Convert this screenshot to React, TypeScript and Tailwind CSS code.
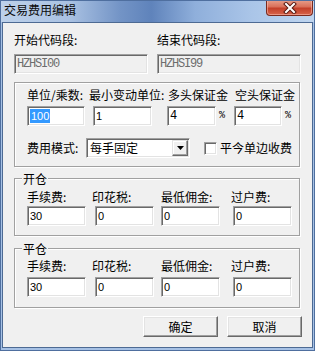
import React from "react";

const cjk = "font-['Noto_Sans_CJK_SC','Liberation_Sans',sans-serif]";
const sans = "font-['Liberation_Sans',sans-serif]";
const mono = "font-['Liberation_Mono',monospace]";

function Field({
  className = "",
  disabled = false,
  children,
}: {
  className?: string;
  disabled?: boolean;
  children?: React.ReactNode;
}) {
  return (
    <div
      className={`box-border h-[20px] border border-t-[#a0a0a0] border-l-[#a0a0a0] border-b-white border-r-white shadow-[inset_1px_1px_0_#696969,inset_-1px_-1px_0_#e3e3e3] flex items-center pl-[2px] overflow-hidden ${
        disabled ? "bg-[#f0f0f0] text-[#6d6d6d]" : "bg-white text-black"
      } ${className}`}
    >
      {children}
    </div>
  );
}

function Group({
  title,
  className = "",
  children,
}: {
  title?: string;
  className?: string;
  children?: React.ReactNode;
}) {
  return (
    <div
      className={`relative box-border ml-[11px] w-[286px] border border-[#a0a0a0] shadow-[inset_1px_1px_0_#ffffff,1px_1px_0_#ffffff] ${className}`}
    >
      {title && (
        <span className="absolute left-[7px] top-[-7px] px-[1px] bg-[#f0f0f0] text-[12px] leading-[14px]">
          {title}
        </span>
      )}
      {children}
    </div>
  );
}

function Btn({ children }: { children: React.ReactNode }) {
  return (
    <div className="box-border w-[75px] h-[21px] bg-[#f0f0f0] border border-t-white border-l-white border-r-[#696969] border-b-[#696969] shadow-[inset_-1px_-1px_0_#a0a0a0,inset_1px_1px_0_#e3e3e3] flex items-center justify-center text-[12px] leading-[14px] pt-[1px]">
      {children}
    </div>
  );
}

function FeeGroup({ title, top, pt, gap, h }: { title: string; top: string; pt: string; gap: string; h: string }) {
  return (
    <Group title={title} className={`${top} ${h}`}>
      <div className={`flex pl-[12px] ${pt}`}>
        <span className="w-[65px]">手续费:</span>
        <span className="w-[69px]">印花税:</span>
        <span className="w-[70px]">最低佣金:</span>
        <span>过户费:</span>
      </div>
      <div className={`flex pl-[12px] ${gap}`}>
        <Field className="w-[59px]">
          <span className={`${sans} text-[11px]`}>30</span>
        </Field>
        <Field className="ml-[9px] w-[59px]">
          <span className={`${sans} text-[11px]`}>0</span>
        </Field>
        <Field className="ml-[7px] w-[59px]">
          <span className={`${sans} text-[11px]`}>0</span>
        </Field>
        <Field className="ml-[13px] w-[59px]">
          <span className={`${sans} text-[11px]`}>0</span>
        </Field>
      </div>
    </Group>
  );
}

export default function App() {
  return (
    <div
      className={`box-border w-[315px] h-[351px] border border-[#4f6f9f] bg-[#a6c1e5] overflow-hidden ${cjk} text-black`}
    >
      {/* title bar */}
      <div className="h-[21px] flex justify-between bg-[linear-gradient(90deg,#bdd1ea_0%,#a9c1e2_22%,#7394c6_38%,#5f83bb_48%,#8fafdb_62%,#aac5e8_80%,#bfd5ef_100%)]">
        <span className="ml-[3px] mt-[1px] text-[12px] leading-[16px] text-[#0b0b0b]">
          交易费用编辑
        </span>
        <div className="box-border mt-[-1px] mr-[1px] w-[47px] h-[16px] rounded-b-[4px] border border-t-0 border-[#7a2a1e] bg-[linear-gradient(180deg,#e7a08c_0%,#d9705a_45%,#c3402a_55%,#d7644a_100%)] shadow-[inset_0_0_0_1px_rgba(255,200,190,0.5)] flex items-center justify-center">
          <svg width="14" height="12" viewBox="0 0 14 12">
            <path d="M3 2 L11 10 M11 2 L3 10" stroke="#5a1a12" strokeWidth="4" strokeLinecap="square" />
            <path d="M3 2 L11 10 M11 2 L3 10" stroke="#ffffff" strokeWidth="2" strokeLinecap="square" />
          </svg>
        </div>
      </div>

      {/* client area */}
      <div className="box-border ml-[1px] w-[311px] h-[326px] border border-[#4d6a93] bg-[#f0f0f0] text-[12px] leading-[14px]">
        {/* top code fields */}
        <div className="flex pt-[10px]">
          <div className="ml-[11px] w-[134px]">
            <div className="h-[14px]">开始代码段:</div>
            <Field disabled className="mt-[7px] w-[134px]">
              <span className={`${mono} text-[12px] tracking-[-1.2px]`}>HZHSI00</span>
            </Field>
          </div>
          <div className="ml-[9px] w-[144px]">
            <div className="h-[14px]">结束代码段:</div>
            <Field disabled className="mt-[7px] w-[144px]">
              <span className={`${mono} text-[12px] tracking-[-1.2px]`}>HZHSI99</span>
            </Field>
          </div>
        </div>

        {/* group 1 */}
        <Group className="mt-[8px] h-[85px]">
          <div className="flex pt-[5px] pl-[12px] h-[19px]">
            <span className="w-[62px]">单位/乘数:</span>
            <span className="w-[79px]">最小变动单位:</span>
            <span className="w-[67px]">多头保证金</span>
            <span>空头保证金</span>
          </div>
          <div className="flex items-center mt-[4px] pl-[12px]">
            <Field className="w-[58px]">
              <span className={`${sans} text-[11px] leading-[14px] bg-[#3399ff] text-white px-[1px]`}>100</span>
            </Field>
            <Field className="ml-[8px] w-[59px]">
              <span className={`${sans} text-[11px]`}>1</span>
            </Field>
            <Field className="ml-[15px] w-[49px]">
              <span className={`${mono} text-[12px]`}>4</span>
            </Field>
            <span className={`${mono} text-[10px] w-[18px] pl-[3px]`}>%</span>
            <Field className="w-[48px]">
              <span className={`${mono} text-[12px]`}>4</span>
            </Field>
            <span className={`${mono} text-[10px] pl-[3px]`}>%</span>
          </div>
          <div className="flex items-center mt-[12px] pl-[12px] h-[20px]">
            <span className="w-[59px]">费用模式:</span>
            <Field className="w-[104px] pl-[1px] pr-[1px]">
              <span className="flex-1 pl-[1px]">每手固定</span>
              <div className="box-border w-[16px] h-[16px] bg-[#f0f0f0] border border-t-[#e3e3e3] border-l-[#e3e3e3] border-r-[#696969] border-b-[#696969] shadow-[inset_-1px_-1px_0_#a0a0a0,inset_1px_1px_0_#ffffff] flex items-center justify-center">
                <svg width="7" height="4" viewBox="0 0 7 4">
                  <path d="M0 0 H7 L3.5 4 Z" fill="#000" />
                </svg>
              </div>
            </Field>
            <div className="box-border ml-[14px] w-[13px] h-[13px] bg-white border border-t-[#a0a0a0] border-l-[#a0a0a0] border-b-white border-r-white shadow-[inset_1px_1px_0_#696969,inset_-1px_-1px_0_#e3e3e3]" />
            <span className="ml-[3px]">平今单边收费</span>
          </div>
        </Group>

        <FeeGroup title="开仓" top="mt-[11px]" h="h-[58px]" pt="pt-[11px]" gap="mt-[2px]" />
        <FeeGroup title="平仓" top="mt-[12px]" h="h-[60px]" pt="pt-[10px]" gap="mt-[4px]" />

        {/* buttons */}
        <div className="flex justify-end gap-[9px] pr-[10px] mt-[8px]">
          <Btn>确定</Btn>
          <Btn>取消</Btn>
        </div>
      </div>
    </div>
  );
}
